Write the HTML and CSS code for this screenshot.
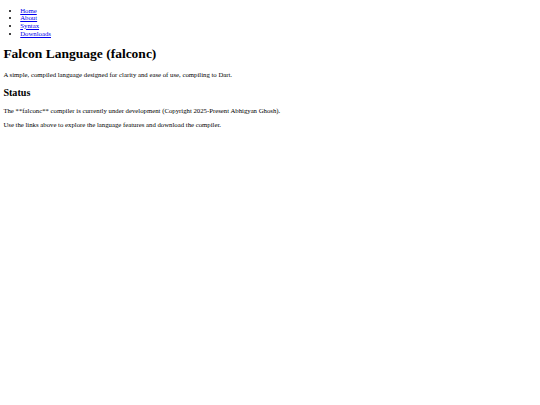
FILE: index.html
```html
<!DOCTYPE html>
<html lang="en">
<head>
<meta charset="utf-8">
<title>Falcon Language (falconc)</title>
<link rel="stylesheet" href="styles.css">
</head>
<body class="page">
<nav class="nav">
<ul class="nav-list">
<li class="nav-item"><a class="nav-link" href="#">Home</a></li>
<li class="nav-item"><a class="nav-link" href="#">About</a></li>
<li class="nav-item"><a class="nav-link" href="#">Syntax</a></li>
<li class="nav-item"><a class="nav-link" href="#">Downloads</a></li>
</ul>
</nav>
<h1 class="title">Falcon Language (falconc)</h1>
<p class="text">A simple, compiled language designed for clarity and ease of use, compiling to Dart.</p>
<h2 class="subtitle">Status</h2>
<p class="text">The **falconc** compiler is currently under development (Copyright 2025-Present Abhigyan Ghosh).</p>
<p class="text">Use the links above to explore the language features and download the compiler.</p>
</body>
</html>
```
FILE: styles.css
```css
html {
  background: #ffffff;
}
.page {
  margin: 0 3.375px 3.375px;
  font-family: "Liberation Serif", "Times New Roman", serif;
  font-size: 6.75px;
  line-height: 7.6px;
  color: #000000;
}
.nav-list {
  margin: 6.75px 0;
  padding-left: 16.875px;
  list-style: disc;
}
.nav-link {
  color: #0000ee;
  text-decoration: underline;
}
.title {
  font-size: 13.5px;
  line-height: 15.5px;
  font-weight: bold;
  margin: 9.05px 0;
}
.subtitle {
  font-size: 10.125px;
  line-height: 11.6px;
  font-weight: bold;
  margin: 8.4px 0;
}
.text {
  margin: 6.75px 0;
  line-height: 7.8px;
}
```
